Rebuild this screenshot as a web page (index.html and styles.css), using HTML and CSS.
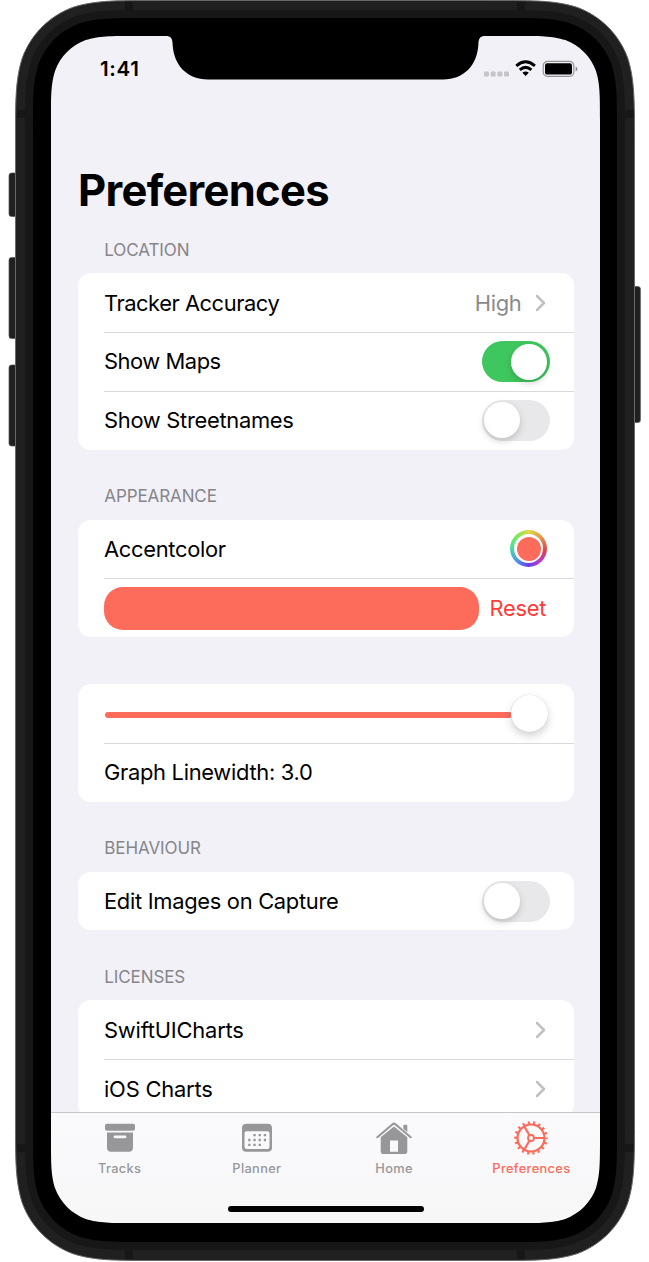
FILE: index.html
```html
<!DOCTYPE html>
<html lang="en">
<head>
<meta charset="utf-8">
<title>Preferences</title>
<link rel="stylesheet" href="styles.css">
</head>
<body>
<div class="phone">
  <!-- Device body with side buttons and antenna bands -->
  <svg class="layer" width="649" height="1262" viewBox="0 0 649 1262">
    <g fill="#202020" stroke="#555" stroke-width=".7"><rect x="9" y="173" width="12" height="43.5" rx="2.5"/><rect x="9" y="257.5" width="12" height="81" rx="2.5"/><rect x="9" y="365" width="12" height="81" rx="2.5"/><rect x="628" y="286.5" width="12.4" height="136" rx="2.5"/></g>
    <path fill="#202020" stroke="#686868" d="M15.500 139.600c0-40.100 0-60.100 6.800-81.600c8.600-23.500 27.100-42.100 50.700-50.700c21.600-6.800 41.600-6.800 81.600-6.800H495.400c40.100 0 60.100 0 81.600 6.800c23.500 8.600 42.100 27.100 50.700 50.700c6.800 21.600 6.800 41.600 6.800 81.600V1121.400c0 40.100 0 60.100-6.800 81.600c-8.600 23.500-27.100 42.100-50.700 50.700c-21.600 6.800-41.600 6.800-81.600 6.800H154.600c-40.100 0-60.100 0-81.600-6.800c-23.500-8.600-42.100-27.100-50.700-50.700c-6.800-21.600-6.800-41.600-6.800-81.600z"/>
    <path fill="#171717" d="M17 110h8v8h-8zM625 110h8.500v8H625zM17 1144h8v8h-8zM625 1144h8.500v8H625zM125 2h8v8h-8zM517 2h8v8h-8zM125 1250h8v9h-8zM517 1250h8v9h-8z"/>
    <path fill="#171717" d="M25 133.900c0-35.700 0-53.500 6.100-72.700c7.600-21 24.100-37.500 45.100-45.100c19.200-6.100 37-6.100 72.700-6.100H501.100c35.700 0 53.500 0 72.700 6.100c21 7.600 37.500 24.100 45.100 45.100c6.100 19.200 6.100 37 6.100 72.700V1126.100c0 35.700 0 53.500-6.100 72.700c-7.600 21-24.100 37.500-45.100 45.100c-19.200 6.100-37 6.100-72.700 6.100H148.900c-35.700 0-53.500 0-72.700-6.100c-21-7.600-37.500-24.100-45.100-45.100c-6.100-19.200-6.100-37-6.100-72.700z"/>
  </svg>
  <div class="screen">
    <header class="status">
      <span class="clock">1:41</span>
      <svg class="status-icons" width="96" height="20" viewBox="0 0 96 20">
        <g fill="#c4c4c9"><rect x="1" y="11.500" width="5" height="5" rx="1.200"/><rect x="7.700" y="11.500" width="5" height="5" rx="1.200"/><rect x="14.400" y="11.500" width="5" height="5" rx="1.200"/><rect x="21" y="11.500" width="5" height="5" rx="1.200"/></g>
        <path d="M33.300 5.800Q42.600-2.200 51.900 5.800M36.800 9.900Q42.600 4.900 48.400 9.900" fill="none" stroke="#000" stroke-width="3"/>
        <path d="M39.400 12.800Q42.600 10.200 45.800 12.800L42.600 16.100Z"/>
        <rect x="60.200" y="1.400" width="30.600" height="15" rx="4.400" fill="none" stroke="#929296" stroke-width="1.200"/>
        <rect x="62" y="3.200" width="27" height="11.400" rx="2.200"/>
        <path d="M92.600 6.400Q94.500 7.200 94.500 8.900T92.600 11.400Z" fill="#8e8e92"/>
      </svg>
    </header>
    <main class="content">
      <h1 class="title">Preferences</h1>
      <h2 class="heading">LOCATION</h2>
      <section class="card">
        <div class="row"><span class="label tight">Tracker Accuracy</span><span class="value">High</span><svg class="chevron" width="12" height="18" viewBox="0 0 12 18"><path d="M2 2L9 9L2 16"/></svg></div>
        <div class="row"><span class="label tight">Show Maps</span><span class="switch on"></span></div>
        <div class="row"><span class="label">Show Streetnames</span><span class="switch"></span></div>
      </section>
      <h2 class="heading">APPEARANCE</h2>
      <section class="card">
        <div class="row"><span class="label">Accentcolor</span><span class="well"><span class="well-gap"><span class="well-color"></span></span></span></div>
        <div class="row"><span class="swatch"></span><span class="reset">Reset</span></div>
      </section>
      <section class="card spaced">
        <div class="row"><span class="track"></span><span class="thumb"></span></div>
        <div class="row"><span class="label">Graph Linewidth: 3.0</span></div>
      </section>
      <h2 class="heading">BEHAVIOUR</h2>
      <section class="card">
        <div class="row"><span class="label">Edit Images on Capture</span><span class="switch"></span></div>
      </section>
      <h2 class="heading">LICENSES</h2>
      <section class="card">
        <div class="row"><span class="label loose">SwiftUICharts</span><svg class="chevron" width="12" height="18" viewBox="0 0 12 18"><path d="M2 2L9 9L2 16"/></svg></div>
        <div class="row"><span class="label loose">iOS Charts</span><svg class="chevron" width="12" height="18" viewBox="0 0 12 18"><path d="M2 2L9 9L2 16"/></svg></div>
      </section>
    </main>
    <footer class="bar">
      <nav class="tabs">
        <a class="tab">
          <svg width="38" height="38" viewBox="0 0 38 38" fill="currentColor"><rect x="4" y="4.700" width="30" height="7" rx="2"/><path fill-rule="evenodd" d="M6 13.500H32V28.500Q32 32.700 28 32.700H10Q6 32.700 6 28.500ZM14 16.500A1.200 1.200 0 0 0 14 19.300H24A1.200 1.200 0 0 0 24 16.500Z"/></svg>
          <span>Tracks</span>
        </a>
        <a class="tab">
          <svg width="38" height="38" viewBox="0 0 38 38" fill="currentColor"><path fill-rule="evenodd" d="M8.500 4.700H29.500Q34 4.700 34 9V28.400Q34 32.700 29.500 32.700H8.500Q4 32.700 4 28.400V9Q4 4.700 8.500 4.700ZM8.500 12.200Q6.500 12.200 6.500 14V27.800Q6.500 30 8.700 30H29.300Q31.500 30 31.500 27.800V14Q31.500 12.200 29.500 12.200Z"/><path fill="none" stroke="currentColor" stroke-width="2.300" stroke-dasharray="2.300 2.900" d="M15.400 16.100H28.500M10.200 21H28.500M10.200 25.900H23.200"/></svg>
          <span>Planner</span>
        </a>
        <a class="tab">
          <svg width="38" height="38" viewBox="0 0 38 38" fill="currentColor"><path d="M2.300 18.200L17.600 5.200Q19 4 20.400 5.200L35.700 18.200" fill="none" stroke="currentColor" stroke-width="2.100" stroke-linecap="round"/><path d="M28.300 6.800Q28.300 5.800 29.300 5.800H31.300Q32.300 5.800 32.300 6.800V13L28.300 9.700Z"/><path fill-rule="evenodd" d="M5.700 18.300L19 7.500L32.300 18.300V32.200Q32.300 35 29.500 35H8.500Q5.700 35 5.700 32.200ZM15 21.600V32.800H23V21.600Z"/></svg>
          <span>Home</span>
        </a>
        <a class="tab active">
          <svg width="38" height="38" viewBox="0 0 38 38" fill="none" stroke="currentColor"><circle cx="19" cy="19" r="13.500" stroke-width="2.200"/><circle cx="19" cy="19" r="15.300" stroke-width="3" stroke-dasharray="2.100 3.241" stroke-dashoffset="1.050"/><circle cx="19" cy="19" r="3" stroke-width="1.800"/><path stroke-width="2.200" d="M22.200 19H32.500M17.400 16.200L12.200 7.300M17.400 21.800L12.200 30.700"/></svg>
          <span>Preferences</span>
        </a>
      </nav>
      <span class="home-indicator"></span>
    </footer>
  </div>
  <!-- Black bezel and notch, drawn over the edges of the screen -->
  <svg class="layer" width="649" height="1262" viewBox="0 0 649 1262">
    <path fill="#000" fill-rule="evenodd" d="M33 129.600c0-32.100 0-48.200 5.500-65.500c6.900-18.900 21.700-33.800 40.600-40.600c17.300-5.500 33.400-5.500 65.500-5.500H505.400c32.100 0 48.200 0 65.500 5.500c18.900 6.900 33.800 21.700 40.600 40.600c5.500 17.300 5.500 33.400 5.500 65.500V1130.400c0 32.100 0 48.200-5.500 65.500c-6.900 18.900-21.700 33.800-40.600 40.600c-17.300 5.500-33.400 5.500-65.500 5.500H144.600c-32.100 0-48.200 0-65.500-5.500c-18.900-6.900-33.800-21.700-40.600-40.600c-5.500-17.300-5.500-33.400-5.500-65.500zM51 120.100c0-24.200 0-36.300 4.100-49.400c5.200-14.200 16.400-25.400 30.600-30.600c13-4.100 25.100-4.100 49.400-4.100H165.500C171 36 172.400 38.500 172.600 44C173.500 65 187 79.500 208 79.500H443C464 79.500 477.500 65 478.400 44C478.600 38.500 480 36 485.500 36H515.900c24.200 0 36.300 0 49.400 4.100c14.200 5.200 25.400 16.400 30.600 30.600c4.100 13 4.100 25.100 4.100 49.400V1138.900c0 24.200 0 36.300-4.100 49.400c-5.200 14.200-16.400 25.400-30.600 30.600c-13 4.100-25.100 4.100-49.400 4.100H135.100c-24.200 0-36.300 0-49.400-4.100c-14.200-5.200-25.400-16.400-30.600-30.600c-4.100-13-4.100-25.100-4.100-49.400z"/>
  </svg>
</div>
</body>
</html>
```
FILE: styles.css
```css
* { box-sizing: border-box; }
body { margin: 0; background: #fff; font-family: Inter, "Liberation Sans", sans-serif; color: #000; }
.phone { position: relative; width: 649px; height: 1262px; padding: 36px 49px 39px 51px; overflow: hidden; }
.layer { position: absolute; left: 0; top: 0; pointer-events: none; }
.screen { position: relative; display: flex; flex-direction: column; width: 549px; height: 1187px; background: #f2f1f7; overflow: hidden; border-radius: 50px; }
.status { flex: none; display: flex; justify-content: space-between; height: 124.200px; padding: 24px 21px 0 49px; }
.clock { font-size: 20.500px; font-weight: 600; line-height: 18px; letter-spacing: .7px; }
.content { flex: 1; min-height: 0; overflow: hidden; padding: 0 26.500px 0 27px; }
.title { margin: 0; height: 60px; font-size: 43.500px; line-height: 60px; font-weight: 700; letter-spacing: -.7px; }
.heading { display: flex; align-items: flex-end; height: 70px; margin: 0; padding: 0 0 13.200px 26.300px; font-size: 17px; line-height: 20px; font-weight: 400; letter-spacing: -.1px; color: #86858a; }
.title + .heading { height: 53px; }
.card { background: #fff; border-radius: 13px; }
.spaced { margin-top: 46.800px; }
.row { position: relative; display: flex; align-items: center; height: 58.800px; padding: 0 24px 0 26px; font-size: 21.900px; line-height: 26px; letter-spacing: -.3px; }
.row + .row { background: linear-gradient(#d9d9dc, #d9d9dc) 26px 0 / 100% 1px no-repeat; }
.label { flex: 1; white-space: nowrap; }
.tight { letter-spacing: -.46px; }
.loose { letter-spacing: -.2px; }
.value { color: #8a8a8e; margin-right: 13px; }
.chevron { margin-right: 3px; fill: none; stroke: #c0c0c3; stroke-width: 2.500px; stroke-linecap: round; stroke-linejoin: round; }
.switch { display: flex; width: 68px; height: 41px; margin-top: .5px; padding: 2.500px; border-radius: 21px; background: #e8e8ea; }
.switch::before { content: ""; width: 36px; height: 36px; border-radius: 50%; background: #fff; box-shadow: 0 3px 7px rgba(0,0,0,.18); }
.switch.on { justify-content: flex-end; background: #3fc75f; }
.well { width: 37px; height: 37px; padding: 4px; border-radius: 50%; margin-right: 2.500px; background: conic-gradient(#dfd64d, #e79a4a 45deg, #df3f51 100deg, #b63bd3 140deg, #6a40e4 180deg, #4a9be8 225deg, #4fe099 275deg, #7ee952 320deg, #dfd64d); }
.well-gap { display: block; height: 100%; padding: 2.500px; border-radius: 50%; background: #fff; }
.well-color { display: block; height: 100%; border-radius: 50%; background: #fd6b5a; }
.swatch { width: 375px; height: 43px; margin-top: 1px; border-radius: 19px; background: #fd6b5a; margin-right: 10.500px; }
.reset { color: #fd3c38; }
.track { flex: 1; height: 6px; margin: 3px -1px 0 1px; border-radius: 3px; background: #fd6b5a; }
.thumb { width: 37px; height: 37px; border-radius: 50%; margin-right: 2px; background: #fff; box-shadow: 0 0 1px rgba(0,0,0,.2), 0 4px 9px rgba(0,0,0,.18); }
.bar { flex: none; display: flex; flex-direction: column; align-items: center; height: 111px; border-top: 1px solid #c7c7c9; background: linear-gradient(#fafafc, #f7f7f8); }
.tabs { display: flex; width: 100%; height: 92.600px; }
.tab { flex: 1; display: flex; flex-direction: column; align-items: center; padding-top: 6px; color: #97979a; font-size: 12.800px; line-height: 16px; font-weight: 500; letter-spacing: .35px; }
.tab span { margin-top: 4px; }
.tab.active { color: #fd6b5a; }
.home-indicator { width: 196px; height: 6.700px; border-radius: 4px; background: #000; }
```
